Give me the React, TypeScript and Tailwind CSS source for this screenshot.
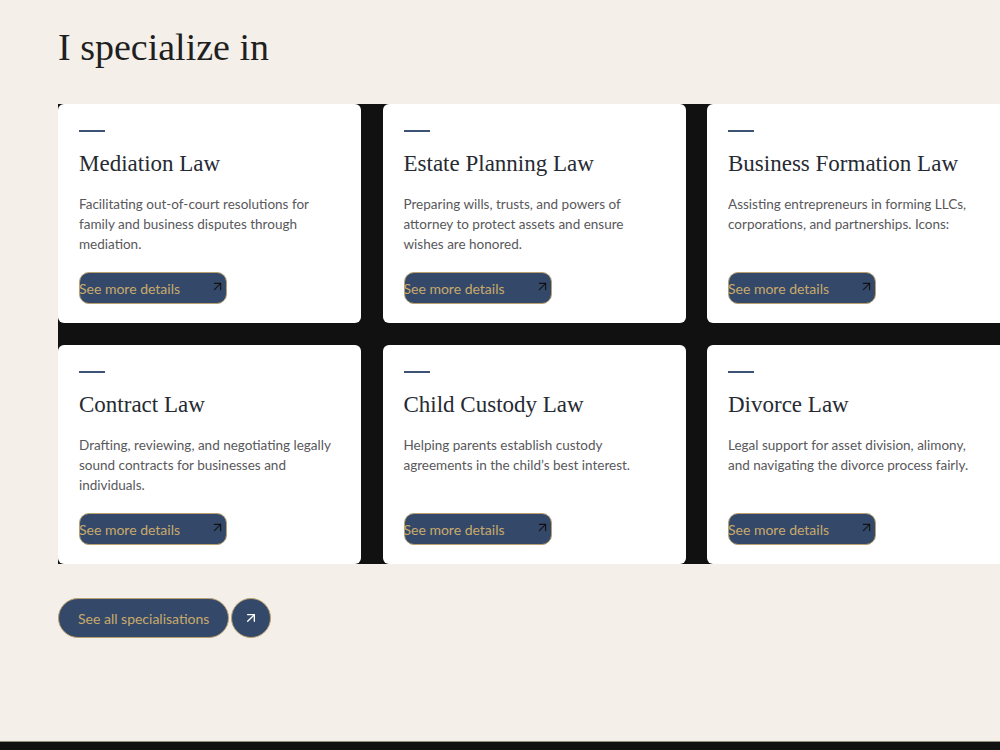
import { ArrowUpRight } from "lucide-react";

type Service = { title: string; text: string };

const services: Service[] = [
  { title: "Mediation Law", text: "Facilitating out-of-court resolutions for family and business disputes through mediation." },
  { title: "Estate Planning Law", text: "Preparing wills, trusts, and powers of attorney to protect assets and ensure wishes are honored." },
  { title: "Business Formation Law", text: "Assisting entrepreneurs in forming LLCs, corporations, and partnerships. Icons:" },
  { title: "Contract Law", text: "Drafting, reviewing, and negotiating legally sound contracts for businesses and individuals." },
  { title: "Child Custody Law", text: "Helping parents establish custody agreements in the child’s best interest." },
  { title: "Divorce Law", text: "Legal support for asset division, alimony, and navigating the divorce process fairly." },
];

const serif = "font-['Liberation_Serif',serif]";
const sans = "font-['Lato','Open_Sans',sans-serif]";

function ServiceCard({ title, text }: Service) {
  return (
    <div className="flex flex-col rounded-[6px] bg-white px-[21px] pt-[26px] pb-[19px]">
      <div className="h-[2px] w-[26px] bg-[#3d5376]" />
      <h3 className={`${serif} mt-[18px] text-[23px] leading-[28px] text-[#262a33]`}>{title}</h3>
      {/* fixed three-line block so buttons line up across a row */}
      <p className={`${sans} mt-[16px] min-h-[60px] text-[13.5px] leading-[20px] text-[#58585b]`}>{text}</p>
      <a
        href="#"
        className={`${sans} relative mt-[18px] flex h-[32px] w-[148px] items-center rounded-[10px] border border-[#b9a070] bg-[#34496a] text-[14px] text-[#c9a96b]`}
      >
        <span className="-ml-px">See more details</span>
        <ArrowUpRight className="absolute right-[1px] top-[6px] h-[15px] w-[15px] text-[#111]" strokeWidth={1.8} />
      </a>
    </div>
  );
}

export default function App() {
  return (
    <div className="flex h-screen w-full flex-col overflow-hidden bg-[#f4efe8]">
      <section className="flex-1 pl-[58px] pt-[24px]">
        <h2 className={`${serif} text-[38px] leading-[46px] text-[#1f1f22]`}>I specialize in</h2>

        <div className="mt-[34px] grid w-[953px] grid-cols-[repeat(3,303px)] gap-x-[21.5px] gap-y-[22px] bg-[#111111]">
          {services.map((s) => (
            <ServiceCard key={s.title} {...s} />
          ))}
        </div>

        <div className="mt-[34px] flex items-center gap-[2px]">
          <a
            href="#"
            className={`${sans} flex h-[40px] items-center rounded-full border border-[#b9a070] bg-[#34496a] px-[19px] text-[14px] text-[#c9a96b]`}
          >
            See all specialisations
          </a>
          <a
            href="#"
            className="flex h-[40px] w-[40px] items-center justify-center rounded-full border border-[#b9a070] bg-[#34496a] text-white"
          >
            <ArrowUpRight className="h-[16px] w-[16px]" strokeWidth={2} />
          </a>
        </div>
      </section>
      <footer className="h-[9px] border-t border-[#8f8c80] bg-[#111111]" />
    </div>
  );
}
